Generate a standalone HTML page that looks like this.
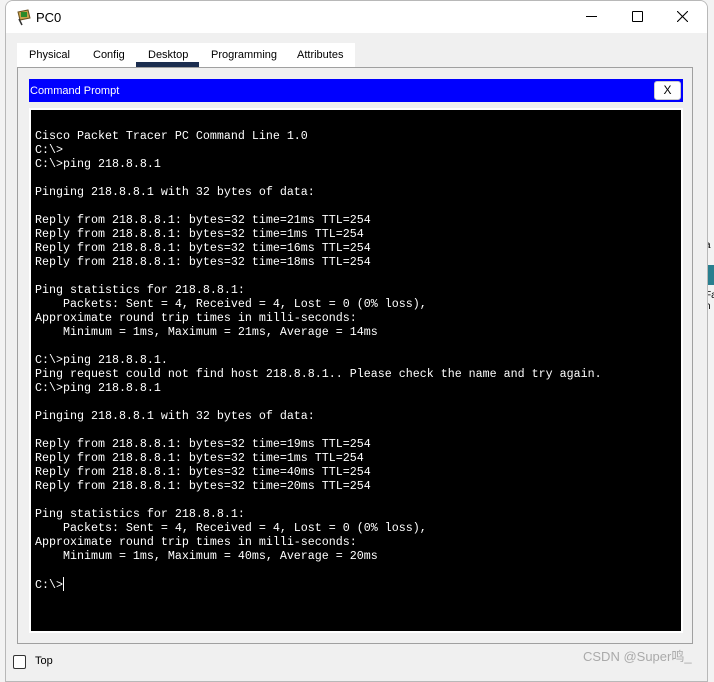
<!DOCTYPE html>
<html><head><meta charset="utf-8"><style>
body{margin:0;width:714px;height:670px;background:#f3f3f3;position:relative;overflow:hidden;font-family:"Liberation Sans",sans-serif}
.win{position:absolute;left:5px;top:0;width:701px;height:680px;background:#f0f0f0;border:1px solid #b8b8b8;border-radius:8px 8px 0 0;overflow:hidden}
.title{position:absolute;left:0;top:0;right:0;height:32px;background:#fff}
.abs{position:absolute}
.tabs{position:absolute;left:17px;top:43px;width:338px;height:24px;background:#fff}
.tab{position:absolute;top:6px;font-size:11px;color:#000}
.panel{position:absolute;left:17px;top:67px;width:676px;height:577px;border:1px solid #a0a0a0;background:#f0f0f0;box-sizing:border-box}
.term{position:absolute;left:31px;top:110px;width:650px;height:521px;background:#000;outline:2px solid #fff}
pre{margin:0;position:absolute;left:4px;top:19px;font-family:"Liberation Mono",monospace;font-size:11.67px;line-height:14px;color:#fff}
</style></head><body>
<div class="abs" style="left:706px;top:265px;width:8px;height:20px;background:#2a7f8f"></div>
<div class="abs" style="left:705px;top:240px;font-size:10px;color:#000">a</div>
<div class="abs" style="left:705px;top:290px;font-size:10px;color:#000">Fa<br>h</div>
<div class="win">
 <div class="title">
  <svg class="abs" style="left:10px;top:8px" width="18" height="18" viewBox="0 0 18 18"><path d="M2 3 L12 1 L14 9 L4 11Z" fill="#c9a24a" stroke="#6a5020"/><rect x="5" y="3" width="6" height="5" fill="#2a8a2a"/><path d="M3 10 L6 16" stroke="#333" stroke-width="1.5"/></svg>
  <div class="abs" style="left:30px;top:9px;font-size:13px;color:#000">PC0</div>
  <div class="abs" style="left:580px;top:15px;width:11px;height:1px;background:#000"></div>
  <div class="abs" style="left:626px;top:10px;width:9px;height:9px;border:1px solid #000;border-radius:1px"></div>
  <svg class="abs" style="left:671px;top:10px" width="11" height="11"><path d="M0 0L11 11M11 0L0 11" stroke="#000" stroke-width="1.1"/></svg>
 </div>
</div>
<div class="tabs">
 <div class="tab" style="left:12px">Physical</div>
 <div class="tab" style="left:76px">Config</div>
 <div class="tab" style="left:131px">Desktop</div>
 <div class="tab" style="left:194px">Programming</div>
 <div class="tab" style="left:280px">Attributes</div>
 <div class="abs" style="left:119px;top:19px;width:63px;height:5px;background:#1b2d4f"></div>
</div>
<div class="panel"></div>
<div class="abs" style="left:29px;top:79px;width:654px;height:23px;background:#0000ff"></div>
<div class="abs" style="left:30px;top:85px;font-size:11px;color:#fff">Command Prompt</div>
<div class="abs" style="left:654px;top:81px;width:27px;height:19px;background:#fff;border-radius:3px;border:1px solid #ccc;box-sizing:border-box;font-size:12px;text-align:center;line-height:17px;color:#000">X</div>
<div class="term"><pre>Cisco Packet Tracer PC Command Line 1.0
C:\>
C:\>ping 218.8.8.1

Pinging 218.8.8.1 with 32 bytes of data:

Reply from 218.8.8.1: bytes=32 time=21ms TTL=254
Reply from 218.8.8.1: bytes=32 time=1ms TTL=254
Reply from 218.8.8.1: bytes=32 time=16ms TTL=254
Reply from 218.8.8.1: bytes=32 time=18ms TTL=254

Ping statistics for 218.8.8.1:
    Packets: Sent = 4, Received = 4, Lost = 0 (0% loss),
Approximate round trip times in milli-seconds:
    Minimum = 1ms, Maximum = 21ms, Average = 14ms

C:\>ping 218.8.8.1.
Ping request could not find host 218.8.8.1.. Please check the name and try again.
C:\>ping 218.8.8.1

Pinging 218.8.8.1 with 32 bytes of data:

Reply from 218.8.8.1: bytes=32 time=19ms TTL=254
Reply from 218.8.8.1: bytes=32 time=1ms TTL=254
Reply from 218.8.8.1: bytes=32 time=40ms TTL=254
Reply from 218.8.8.1: bytes=32 time=20ms TTL=254

Ping statistics for 218.8.8.1:
    Packets: Sent = 4, Received = 4, Lost = 0 (0% loss),
Approximate round trip times in milli-seconds:
    Minimum = 1ms, Maximum = 40ms, Average = 20ms

C:\><span style="display:inline-block;width:1px;height:14px;background:#fff;vertical-align:-3px"></span></pre></div>
<div class="abs" style="left:13px;top:655px;width:11px;height:12px;border:1px solid #333;border-radius:2px;background:#fff"></div>
<div class="abs" style="left:35px;top:655px;font-size:11px;color:#000">Top</div>
<div class="abs" style="left:583px;top:646px;font-size:13px;color:#aaa;font-family:'Liberation Sans','Noto Sans CJK SC',sans-serif">CSDN @Super鸣_</div>
</body></html>
